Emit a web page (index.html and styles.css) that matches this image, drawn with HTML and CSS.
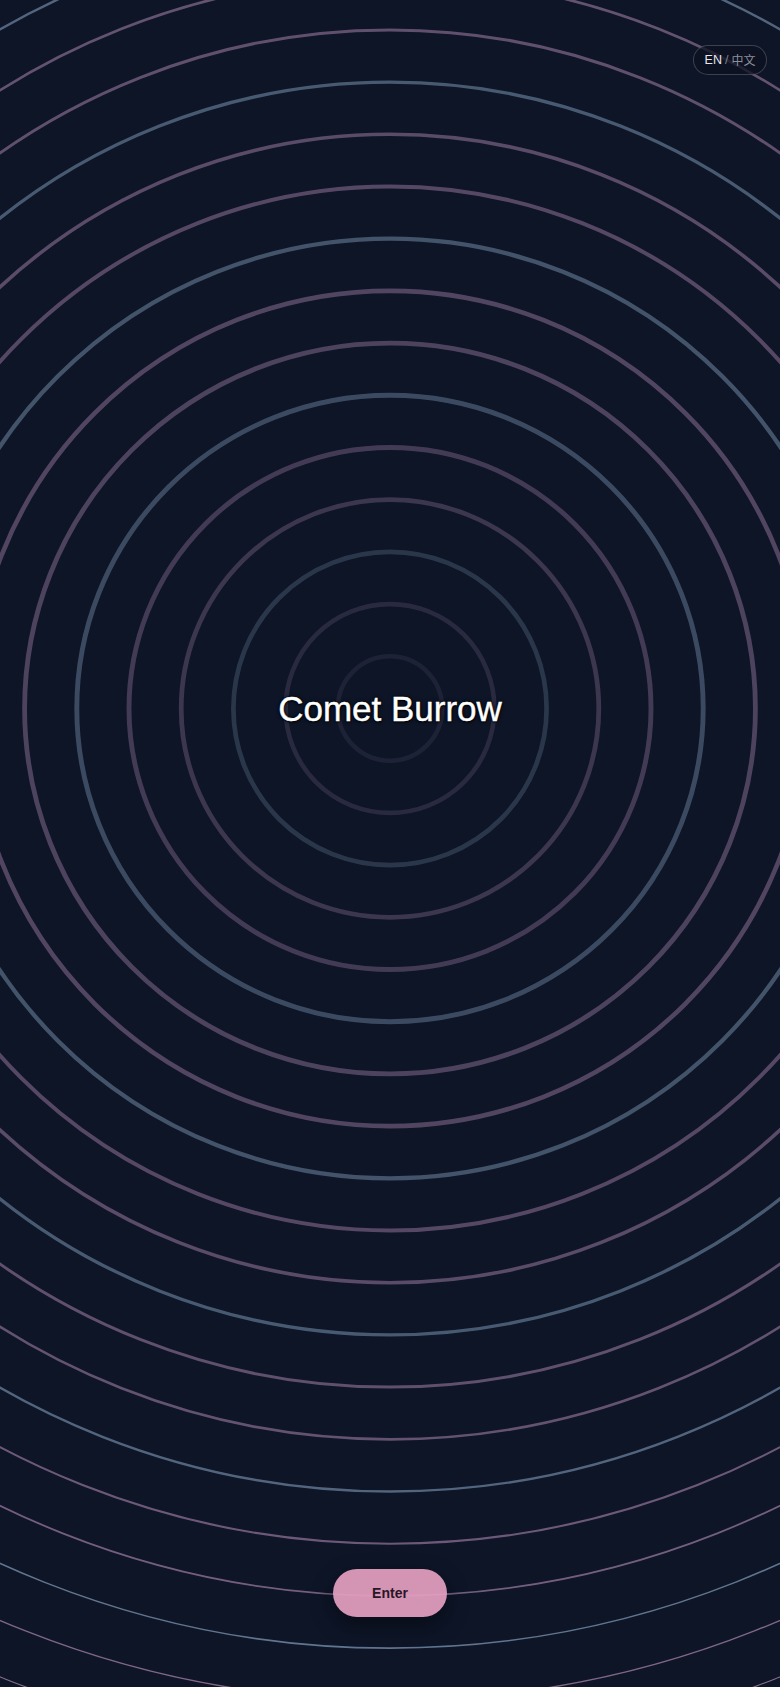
FILE: index.html
```html
<!DOCTYPE html>
<html lang="en">
<head>
<meta charset="utf-8">
<meta name="viewport" content="width=device-width, initial-scale=1">
<title>Comet Burrow</title>
<link rel="stylesheet" href="styles.css">
</head>
<body>
<main class="stage">
  <svg class="rings" viewBox="0 0 780 1687" preserveAspectRatio="xMidYMid slice" aria-hidden="true">
    <g fill="none" transform="translate(390 708.5)">
      <circle r="52.2" stroke="#d8a4d4" stroke-width="4.5" stroke-opacity="0.09"/>
      <circle r="104.4" stroke="#d8a4d4" stroke-width="4.6" stroke-opacity="0.14"/>
      <circle r="156.6" stroke="#a8c8e8" stroke-width="4.7" stroke-opacity="0.19"/>
      <circle r="208.8" stroke="#d8a4d4" stroke-width="4.8" stroke-opacity="0.23"/>
      <circle r="261" stroke="#d8a4d4" stroke-width="4.9" stroke-opacity="0.27"/>
      <circle r="313.2" stroke="#a8c8e8" stroke-width="4.9" stroke-opacity="0.30"/>
      <circle r="365.4" stroke="#d8a4d4" stroke-width="4.8" stroke-opacity="0.32"/>
      <circle r="417.6" stroke="#d8a4d4" stroke-width="4.6" stroke-opacity="0.34"/>
      <circle r="469.8" stroke="#a8c8e8" stroke-width="4.3" stroke-opacity="0.35"/>
      <circle r="522" stroke="#d8a4d4" stroke-width="4.0" stroke-opacity="0.36"/>
      <circle r="574.2" stroke="#d8a4d4" stroke-width="3.6" stroke-opacity="0.38"/>
      <circle r="626.4" stroke="#a8c8e8" stroke-width="3.3" stroke-opacity="0.39"/>
      <circle r="678.6" stroke="#d8a4d4" stroke-width="3.0" stroke-opacity="0.41"/>
      <circle r="730.8" stroke="#d8a4d4" stroke-width="2.7" stroke-opacity="0.43"/>
      <circle r="783" stroke="#a8c8e8" stroke-width="2.4" stroke-opacity="0.45"/>
      <circle r="835.2" stroke="#d8a4d4" stroke-width="2.1" stroke-opacity="0.48"/>
      <circle r="887.4" stroke="#d8a4d4" stroke-width="1.8" stroke-opacity="0.51"/>
      <circle r="939.6" stroke="#a8c8e8" stroke-width="1.6" stroke-opacity="0.54"/>
      <circle r="991.8" stroke="#d8a4d4" stroke-width="1.4" stroke-opacity="0.57"/>
      <circle r="1044" stroke="#d8a4d4" stroke-width="1.2" stroke-opacity="0.60"/>
      <circle r="1096.2" stroke="#a8c8e8" stroke-width="1.0" stroke-opacity="0.63"/>
    </g>
  </svg>

  <button class="lang-toggle" type="button">
    <span class="lang-active">EN</span>
    <span class="lang-sep">/</span>
    <span class="lang-other">中文</span>
  </button>

  <section class="hero">
    <h1 class="title">Comet Burrow</h1>
  </section>

  <footer class="actions">
    <button class="enter-btn" type="button">Enter</button>
  </footer>
</main>
</body>
</html>
```

FILE: styles.css
```css
* {
  box-sizing: border-box;
}

html,
body {
  margin: 0;
  padding: 0;
  height: 100%;
  background: #0d1527;
}

body {
  font-family: "Liberation Sans", Arial, "Noto Sans CJK SC", sans-serif;
  color: #ffffff;
}

.stage {
  position: relative;
  height: 100vh;
  overflow: hidden;
  display: flex;
  flex-direction: column;
  align-items: center;
  background: #0d1527;
}

.rings {
  position: absolute;
  inset: 0;
  width: 100%;
  height: 100%;
  z-index: 0;
}

.lang-toggle {
  position: absolute;
  top: 45px;
  right: 13px;
  z-index: 2;
  height: 30px;
  width: 74px;
  padding: 0;
  display: flex;
  align-items: center;
  justify-content: center;
  gap: 3px;
  border: 1px solid rgba(255, 255, 255, 0.2);
  border-radius: 15px;
  background: rgba(12, 17, 32, 0.75);
  font-family: "Liberation Sans", Arial, "Noto Sans CJK SC", sans-serif;
  font-size: 12.5px;
  line-height: 1;
  cursor: pointer;
}

.lang-active {
  color: #e6e8ee;
  font-weight: 400;
}

.lang-sep {
  color: #7d8290;
}

.lang-other {
  color: #8c909c;
  font-family: "Noto Sans CJK SC", "Liberation Sans", sans-serif;
  font-size: 12px;
}

.hero {
  position: relative;
  z-index: 1;
  height: 84vh;
  display: flex;
  align-items: center;
  justify-content: center;
}

.title {
  margin: 0;
  font-size: 35px;
  font-weight: 400;
  line-height: 1.2;
  color: #ffffff;
  letter-spacing: 0;
  -webkit-text-stroke: 0.4px #ffffff;
  text-shadow: 0 0 2px rgba(0, 0, 0, 1), 0 0 4px rgba(0, 0, 0, 0.8), 0 1px 2px rgba(0, 0, 0, 0.9);
}

.actions {
  position: relative;
  z-index: 1;
  margin-top: auto;
  padding-bottom: 70px;
  display: flex;
  justify-content: center;
}

.enter-btn {
  width: 114px;
  height: 48px;
  border: none;
  border-radius: 24px;
  background: rgba(228, 158, 192, 0.93);
  color: #2a1626;
  font-family: "Liberation Sans", Arial, sans-serif;
  font-size: 14px;
  font-weight: 700;
  cursor: pointer;
  box-shadow: 0 8px 22px rgba(0, 0, 0, 0.45);
}
```
